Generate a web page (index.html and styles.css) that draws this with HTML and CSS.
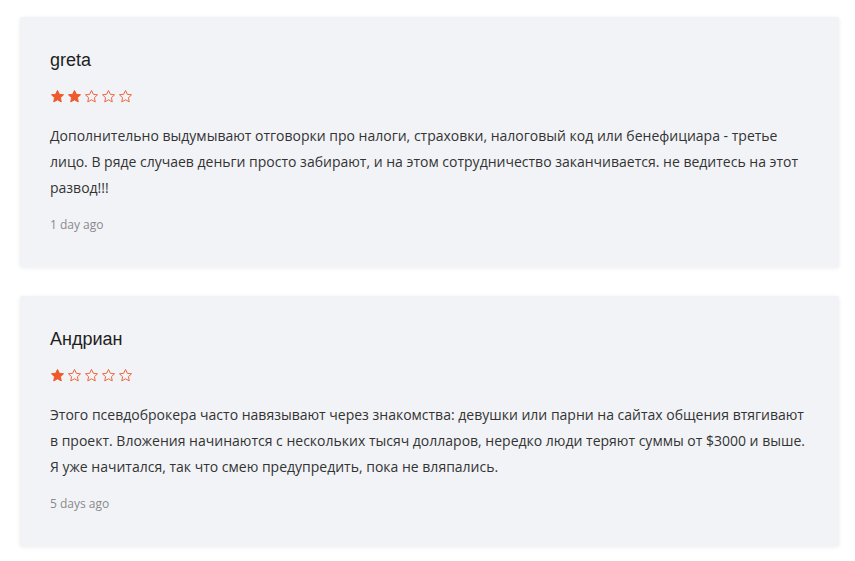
FILE: index.html
```html
<!DOCTYPE html>
<html lang="ru">
<head>
  <meta charset="UTF-8" />
  <meta name="viewport" content="width=device-width, initial-scale=1.0" />
  <title>Отзывы</title>
  <link rel="stylesheet" href="styles.css">
</head>
<body>
  <svg width="0" height="0" class="defs">
    <defs>
      <path id="star" d="M12 2.3l2.95 6.15 6.7.8-4.95 4.65 1.3 6.7L12 17.3l-6 3.3 1.3-6.7-4.95-4.65 6.7-.8z" />
    </defs>
  </svg>

  <div class="review">
    <div class="name">greta</div>
    <div class="stars">
      <svg class="star full" viewBox="0 0 24 24"><use href="#star"/></svg>
      <svg class="star full" viewBox="0 0 24 24"><use href="#star"/></svg>
      <svg class="star" viewBox="0 0 24 24"><use href="#star"/></svg>
      <svg class="star" viewBox="0 0 24 24"><use href="#star"/></svg>
      <svg class="star" viewBox="0 0 24 24"><use href="#star"/></svg>
    </div>
    <p class="text">Дополнительно выдумывают отговорки про налоги, страховки, налоговый код или бенефициара - третье лицо. В ряде случаев деньги просто забирают, и на этом сотрудничество заканчивается. не ведитесь на этот развод!!!</p>
    <div class="date">1 day ago</div>
  </div>

  <div class="review">
    <div class="name">Андриан</div>
    <div class="stars">
      <svg class="star full" viewBox="0 0 24 24"><use href="#star"/></svg>
      <svg class="star" viewBox="0 0 24 24"><use href="#star"/></svg>
      <svg class="star" viewBox="0 0 24 24"><use href="#star"/></svg>
      <svg class="star" viewBox="0 0 24 24"><use href="#star"/></svg>
      <svg class="star" viewBox="0 0 24 24"><use href="#star"/></svg>
    </div>
    <p class="text">Этого псевдоброкера часто навязывают через знакомства: девушки или парни на сайтах общения втягивают в проект. Вложения начинаются с нескольких тысяч долларов, нередко люди теряют суммы от $3000 и выше. Я уже начитался, так что смею предупредить, пока не вляпались.</p>
    <div class="date">5 days ago</div>
  </div>
</body>
</html>
```

FILE: styles.css
```css
body {
  margin: 0;
  padding: 17px 16px 0 20px;
  background: #fff;
  font-family: "Open Sans", sans-serif;
  color: #333;
}
.defs {
  position: absolute;
}
.review {
  background: #f2f3f7;
  padding: 30px 30px 33px;
  margin-bottom: 29px;
  box-shadow: 0 1px 4px rgba(0,0,0,0.08);
  border-radius: 2px;
}
.name {
  font-family: "Liberation Sans", Arial, sans-serif;
  font-size: 18px;
  line-height: 26px;
  color: #1e1e1e;
}
.stars {
  display: flex;
  gap: 2px;
  margin-top: 15px;
  height: 16px;
  align-items: center;
}
.star {
  width: 15px;
  height: 15px;
  fill: none;
  stroke: #f0663e;
  stroke-width: 1.6;
  stroke-linejoin: round;
}
.star.full {
  fill: #ee5a2b;
  stroke: #ee5a2b;
}
.text {
  margin: 19px 0 0;
  font-size: 14px;
  line-height: 26px;
  color: #333;
}
.date {
  margin-top: 15px;
  font-size: 12px;
  line-height: 18px;
  color: #8a8a8a;
}
```
